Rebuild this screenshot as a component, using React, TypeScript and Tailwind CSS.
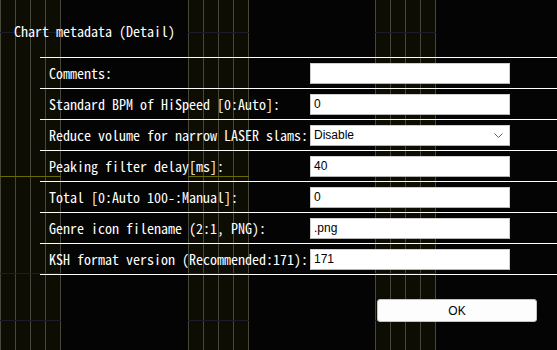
import React from "react";

const MONO = { fontFamily: '"Noto Sans Mono CJK JP", "Liberation Mono", monospace' };
const SANS = { fontFamily: '"Liberation Sans", Arial, sans-serif' };

const rows: { label: string; value: string; select?: boolean }[] = [
  { label: "Comments:", value: "" },
  { label: "Standard BPM of HiSpeed [0:Auto]:", value: "0" },
  { label: "Reduce volume for narrow LASER slams:", value: "Disable", select: true },
  { label: "Peaking filter delay[ms]:", value: "40" },
  { label: "Total [0:Auto 100-:Manual]:", value: "0" },
  { label: "Genre icon filename (2:1, PNG):", value: ".png" },
  { label: "KSH format version (Recommended:171):", value: "171" },
];

function Lane({ left }: { left: number }) {
  return (
    <div className="absolute top-0 h-full w-[61px] bg-[#0d0d04]" style={{ left }}>
      {[0, 15, 30, 45, 60].map((x) => (
        <div key={x} className="absolute top-0 h-full w-px bg-[#46463a]" style={{ left: x }} />
      ))}
      <div className="absolute left-0 top-[32px] h-px w-full bg-[#1c1c2a]" />
      <div className="absolute left-0 top-[176px] h-px w-full bg-[#6a6a00]" />
      <div className="absolute left-0 top-[273px] h-px w-full bg-[#1c1c2a]" />
      <div className="absolute left-0 top-[320px] h-px w-full bg-[#1c1c2a]" />
    </div>
  );
}

export default function App() {
  return (
    <div className="relative w-[557px] h-[350px] overflow-hidden bg-[#040404] text-white">
      <Lane left={0} />
      <Lane left={188} />
      <Lane left={375} />
      <div className="relative flex flex-col">
        <div className="mt-[21px] h-[20px] pl-[14px] text-[14px] leading-[20px]" style={MONO}>
          Chart metadata (Detail)
        </div>
        <div className="mt-[16px] ml-[40px] border-t border-white">
          {rows.map((r) => (
            <div key={r.label} className="flex h-[31px] items-center border-b border-white">
              <div className="w-[270px] pl-[9px] text-[14px] leading-[20px] whitespace-nowrap" style={MONO}>
                {r.label}
              </div>
              <div
                className="relative flex h-[21px] w-[200px] items-center border border-[#cfcfcf] border-b-[#b4b4b4] bg-white pl-[3px] text-[12px] text-black"
                style={SANS}
              >
                {r.value}
                {r.select && (
                  <svg className="absolute right-[6px] top-[7px]" width="9" height="6" viewBox="0 0 9 6">
                    <polyline points="0.5,0.5 4.5,4.5 8.5,0.5" fill="none" stroke="#606060" strokeWidth="1" />
                  </svg>
                )}
              </div>
            </div>
          ))}
        </div>
        <div className="mt-[24px] flex justify-end pr-[20px]">
          <button
            className="flex h-[23px] w-[160px] items-center justify-center rounded-[3px] border border-[#c4c4c4] bg-[#fdfdfd] text-[12px] text-black"
            style={SANS}
          >
            OK
          </button>
        </div>
      </div>
    </div>
  );
}
